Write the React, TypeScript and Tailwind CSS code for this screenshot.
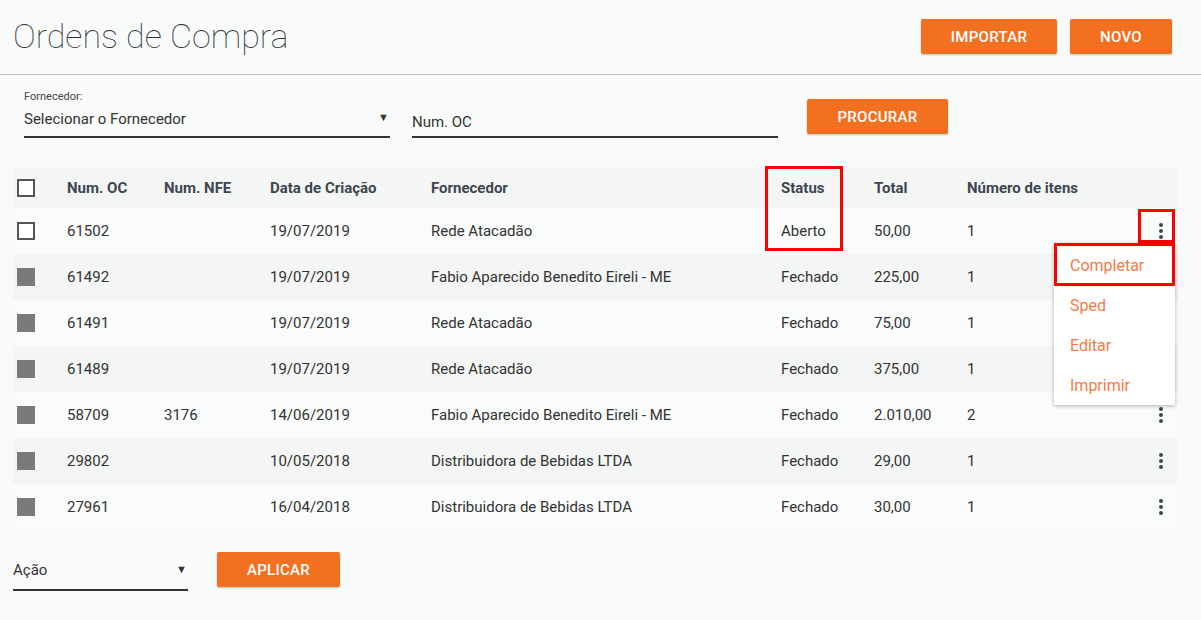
import React from 'react'

type Row = {
	oc: string
	nfe: string
	data: string
	fornecedor: string
	status: string
	total: string
	itens: string
	open: boolean
}

const rows: Row[] = [
	{ oc: '61502', nfe: '', data: '19/07/2019', fornecedor: 'Rede Atacadão', status: 'Aberto', total: '50,00', itens: '1', open: true },
	{ oc: '61492', nfe: '', data: '19/07/2019', fornecedor: 'Fabio Aparecido Benedito Eireli - ME', status: 'Fechado', total: '225,00', itens: '1', open: false },
	{ oc: '61491', nfe: '', data: '19/07/2019', fornecedor: 'Rede Atacadão', status: 'Fechado', total: '75,00', itens: '1', open: false },
	{ oc: '61489', nfe: '', data: '19/07/2019', fornecedor: 'Rede Atacadão', status: 'Fechado', total: '375,00', itens: '1', open: false },
	{ oc: '58709', nfe: '3176', data: '14/06/2019', fornecedor: 'Fabio Aparecido Benedito Eireli - ME', status: 'Fechado', total: '2.010,00', itens: '2', open: false },
	{ oc: '29802', nfe: '', data: '10/05/2018', fornecedor: 'Distribuidora de Bebidas LTDA', status: 'Fechado', total: '29,00', itens: '1', open: false },
	{ oc: '27961', nfe: '', data: '16/04/2018', fornecedor: 'Distribuidora de Bebidas LTDA', status: 'Fechado', total: '30,00', itens: '1', open: false },
]

const menuItems = ['Completar', 'Sped', 'Editar', 'Imprimir']

const Kebab = () => (
	<svg width="6" height="18" viewBox="0 0 6 18" className="text-[#3d4650]">
		<circle cx="3" cy="3" r="2" fill="currentColor" />
		<circle cx="3" cy="9" r="2" fill="currentColor" />
		<circle cx="3" cy="15" r="2" fill="currentColor" />
	</svg>
)

const OrangeButton = ({ label, className }: { label: string; className: string }) => (
	<button className={`h-[35px] rounded-[2px] bg-[#f37021] text-white text-[15px] font-medium tracking-[0.3px] pt-[1px] shadow-[0_1px_2px_rgba(0,0,0,0.25)] ${className}`}>
		{label}
	</button>
)

const App = () => {
	return (
		<div className="w-[1201px] h-[620px] overflow-hidden bg-[#f9fafa] font-['Roboto',sans-serif] text-[#333]">
			{/* cabeçalho */}
			<div className="h-[75px] border-b border-[#c6c6c6] flex items-start justify-between">
				<h1 className="ml-[13px] mt-[16px] text-[34px] leading-[40px] font-thin text-[#2f3338]">
					Ordens de Compra
				</h1>
				<div className="flex gap-[13px] mt-[19px] mr-[29px]">
					<OrangeButton label="IMPORTAR" className="w-[136px]" />
					<OrangeButton label="NOVO" className="w-[102px]" />
				</div>
			</div>

			{/* filtros */}
			<div className="flex items-start mt-[15px] ml-[24px]">
				<div className="w-[366px] border-b-2 border-[#333] h-[48px]">
					<div className="text-[11px] leading-[14px] text-[#444]">Fornecedor:</div>
					<div className="flex justify-between items-center mt-[6px] text-[15px] leading-[18px] text-[#333]">
						<span>Selecionar o Fornecedor</span>
						<span className="text-[11px] mr-[1px] -mt-[2px]">▼</span>
					</div>
				</div>
				<div className="ml-[22px] w-[366px] border-b-2 border-[#333] h-[48px] flex items-end pb-[3px] text-[15px] text-[#333]">
					Num. OC
				</div>
				<OrangeButton label="PROCURAR" className="ml-[29px] mt-[9px] w-[141px]" />
			</div>

			{/* tabela */}
			<div className="relative mt-[30px] mx-[13px] w-[1165px] text-[15px]">
				<div className="flex items-center h-[40px] bg-[#f4f5f5] font-bold text-[#3d4650]">
					<div className="w-[54px] pl-[4px]">
						<div className="w-[18px] h-[18px] border-2 border-[#555] bg-white" />
					</div>
					<div className="w-[97px]">Num. OC</div>
					<div className="w-[106px]">Num. NFE</div>
					<div className="w-[161px]">Data de Criação</div>
					<div className="w-[350px]">Fornecedor</div>
					<div className="w-[93px]">Status</div>
					<div className="w-[93px]">Total</div>
					<div className="flex-1">Número de itens</div>
				</div>
				{rows.map((row, index) => (
					<div
						key={row.oc}
						className={`flex items-center h-[46px] ${index % 2 === 1 ? 'bg-[#f4f5f5]' : 'bg-[#fafbfb]'}`}
					>
						<div className="w-[54px] pl-[4px]">
							{row.open ? (
								<div className="w-[18px] h-[18px] border-2 border-[#555] bg-white" />
							) : (
								<div className="w-[18px] h-[18px] bg-[#7a7a7a]" />
							)}
						</div>
						<div className="w-[97px]">{row.oc}</div>
						<div className="w-[106px]">{row.nfe}</div>
						<div className="w-[161px]">{row.data}</div>
						<div className="w-[350px]">{row.fornecedor}</div>
						<div className="w-[93px]">{row.status}</div>
						<div className="w-[93px]">{row.total}</div>
						<div className="flex-1">{row.itens}</div>
						<div className="w-[40px] flex justify-end pr-[14px]">
							<Kebab />
						</div>
					</div>
				))}

				{/* destaques em vermelho */}
				<div className="absolute left-[752px] top-[-2px] w-[78px] h-[85px] border-[3px] border-[#ff0000]" />
				<div className="absolute left-[1125px] top-[41px] w-[37px] h-[34px] border-[3px] border-[#ff0000]" />

				{/* menu de ações */}
				<div className="absolute left-[1041px] top-[75px] w-[121px] bg-white shadow-[0_1px_4px_rgba(0,0,0,0.3)]">
					{menuItems.map((item, index) =>
						index === 0 ? (
							<div
								key={item}
								className="h-[43px] flex items-center pl-[13px] pt-[2px] text-[16px] text-[#f47a45] border-[3px] border-[#ff0000]"
							>
								{item}
							</div>
						) : (
							<div
								key={item}
								className="h-[40px] flex items-center pl-[16px] text-[16px] text-[#f47a45] last:h-[39px] last:pt-[1px]"
							>
								{item}
							</div>
						)
					)}
				</div>
			</div>

			{/* rodapé */}
			<div className="flex items-start ml-[13px] mt-[22px]">
				<div className="mt-[2px] w-[175px] h-[37px] border-b-2 border-[#333] flex justify-between items-end pb-[8px] text-[15px] text-[#333]">
					<span>Ação</span>
					<span className="text-[11px] mr-[1px] mb-[3px]">▼</span>
				</div>
				<OrangeButton label="APLICAR" className="ml-[29px] w-[123px]" />
			</div>
		</div>
	)
}

export default App
